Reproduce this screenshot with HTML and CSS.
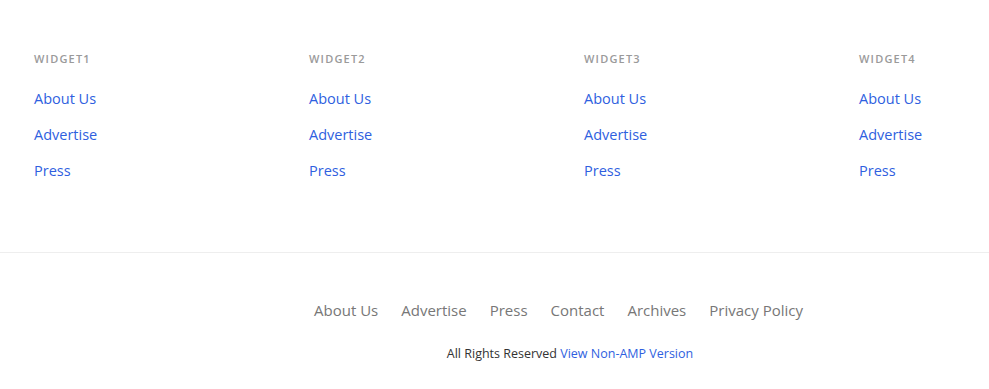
FILE: index.html
```html
<!DOCTYPE html>
<html lang="en">

<head>
    <meta charset="UTF-8">
    <meta name="viewport" content="width=device-width, initial-scale=1.0">
    <title>Footer</title>
    <link rel="stylesheet" href="styles.css">
</head>

<body>
    <div class="widgets">
        <div class="widget">
            <h4>Widget1</h4>
            <ul>
                <li><a href="#">About Us</a></li>
                <li><a href="#">Advertise</a></li>
                <li><a href="#">Press</a></li>
            </ul>
        </div>
        <div class="widget">
            <h4>Widget2</h4>
            <ul>
                <li><a href="#">About Us</a></li>
                <li><a href="#">Advertise</a></li>
                <li><a href="#">Press</a></li>
            </ul>
        </div>
        <div class="widget">
            <h4>Widget3</h4>
            <ul>
                <li><a href="#">About Us</a></li>
                <li><a href="#">Advertise</a></li>
                <li><a href="#">Press</a></li>
            </ul>
        </div>
        <div class="widget">
            <h4>Widget4</h4>
            <ul>
                <li><a href="#">About Us</a></li>
                <li><a href="#">Advertise</a></li>
                <li><a href="#">Press</a></li>
            </ul>
        </div>
    </div>

    <footer class="bottom">
        <nav class="footer-nav">
            <a href="#">About Us</a>
            <a href="#">Advertise</a>
            <a href="#">Press</a>
            <a href="#">Contact</a>
            <a href="#">Archives</a>
            <a href="#">Privacy Policy</a>
        </nav>
        <p class="rights">All Rights Reserved <a href="#">View Non-AMP Version</a></p>
    </footer>
</body>

</html>
```

FILE: styles.css
```css
body {
    font-family: "Open Sans", Arial, sans-serif;
    margin: 0;
    padding: 0;
    background: #fff;
    color: #333;
}

a {
    text-decoration: none;
}

/* Widgets */
.widgets {
    display: grid;
    grid-template-columns: repeat(3, 275px) 1fr;
    padding: 49px 0 0 34px;
    height: 203px;
    border-bottom: 1px solid #eee;
}

.widget h4 {
    margin: 0 0 19px;
    font-size: 11px;
    line-height: 20px;
    font-weight: 600;
    letter-spacing: 1.2px;
    text-transform: uppercase;
    color: #9a9a9a;
}

.widget ul {
    list-style: none;
    margin: 0;
    padding: 0;
}

.widget li {
    height: 36px;
    font-size: 14.5px;
    line-height: 22px;
}

.widget a {
    color: #2f5fe0;
}

/* Bottom footer */
.bottom {
    padding: 45px 0 0 151px;
    text-align: center;
}

.footer-nav {
    display: flex;
    justify-content: center;
    font-size: 15px;
    line-height: 24px;
}

.footer-nav a {
    color: #777;
    margin-right: 23px;
}

.rights {
    margin: 22px 0 0;
    font-size: 12.5px;
    line-height: 20px;
    color: #333;
}

.rights a {
    color: #2f5fe0;
}
```
